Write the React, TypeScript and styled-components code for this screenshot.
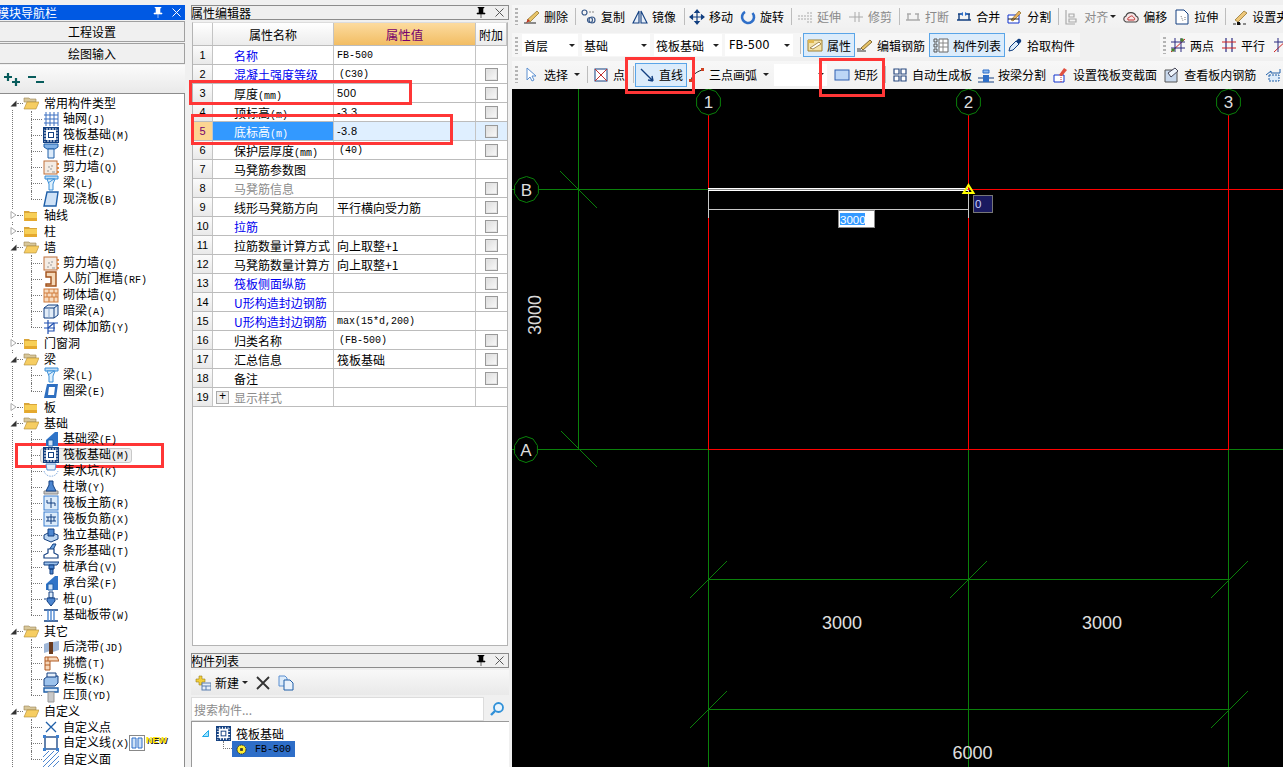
import React from "react";
import styled, { createGlobalStyle } from "styled-components";

const CJK = `"Noto Sans CJK SC", "Liberation Sans", sans-serif`;
const MONO = `"Liberation Mono", "Noto Sans CJK SC", monospace`;

const GlobalStyle = createGlobalStyle`
  html, body { margin: 0; padding: 0; background: #f0f0f0; }
  * { box-sizing: border-box; }
  body { font-family: ${CJK}; font-size: 12px; color: #000; }
`;

/* ---------- icons ---------- */
const B = "#1f5fa8";
const N = "#123f80";
const icons: Record<string, React.ReactNode> = {
  folder: (<><path d="M1 4h5l1 1h7v9H1z" fill="#d9a53a" /><path d="M1.5 6h12.5v8H1.5z" fill="#f7cf57" /><path d="M1.5 11h12.5v3H1.5z" fill="#e5a92e" /></>),
  folderOpen: (<><path d="M1 3h5l1 1h6v3H1z" fill="#d8c79a" stroke="#9a8450" strokeWidth=".6" /><path d="M1 14 4 7h12l-3 7z" fill="#f6cd62" stroke="#b08a35" strokeWidth=".6" /></>),
  grid: (<g stroke="#3a6fc0" strokeWidth="1" fill="none"><path d="M3 1v14M7 1v14M11 1v14M15 1v14M1 4h14M1 8h14M1 12h14" /></g>),
  raft: (<><rect x="0" y="0" width="16" height="16" fill="#fff" /><rect x="1.5" y="1.5" width="13" height="13" fill="none" stroke={N} strokeWidth="3" strokeDasharray="2 1" /><rect x="0.5" y="0.5" width="15" height="15" fill="none" stroke={N} /><rect x="5.5" y="5.5" width="5" height="5" fill="#fff" stroke={N} /></>),
  column: (<><path d="M1 1h14v3l-3 2H4L1 4z" fill="#7fb0e6" stroke={B} /><path d="M5 6h6v9H5z" fill="#dcebfa" stroke={B} /></>),
  shear: (<><rect x="1" y="2" width="13" height="13" fill="#f4ece4" stroke="#c0703a" /><path d="M4 12h2M7 10h2M5 8h2M9 13h3M8 7h2" stroke="#999" /><path d="M15 4v2M15 8v2M15 12v2" stroke="#d8701c" strokeWidth="1.5" /></>),
  beam: (<><path d="M2 1h13v3H2z" fill="#bcdcf6" stroke="#3b8fd8" /><path d="M4 4l8 0-2 5v6H6V9z" fill="#dff0fc" stroke="#3b8fd8" /><path d="M5 8l6-4" stroke="#3b8fd8" /></>),
  slab: (<path d="M4 1h11l-2 14H1z" fill="#cfe2f7" stroke={B} strokeWidth="1.4" />),
  frameWall: (<path d="M3 1h10v14H3v-2h5V6H3z" fill="#f5d8b8" stroke="#a0501a" strokeWidth="1.4" />),
  brick: (<><rect x="1" y="2" width="14" height="13" fill="#f8dcc0" stroke="#d07a3a" /><path d="M1 6h14M1 10h14M6 2v4M11 2v4M4 6v4M9 6v4M13 6v4M6 10v5M11 10v5" stroke="#d07a3a" /></>),
  hidden: (<><path d="M1 5l4-3h10v10l-4 3H1z" fill="#e2ecf7" stroke={N} /><path d="M1 5h10v10M11 5l4-3" fill="none" stroke={N} /><path d="M6 5v10" stroke="#8aa8cc" /></>),
  rebar: (<g fill="none" stroke="#1f4fb0" strokeWidth="1.2"><path d="M1 4h14M5 1v14M11 4v8H5M1 9h11" /><path d="M5 9l6-5" /></g>),
  ring: (<><path d="M4 1h11l-2 14H1z" fill="#2f6fc0" /><path d="M6 4h6l-1 8H5z" fill="#fff" /></>),
  fbeam: (<><path d="M3 15V9L12 1h3v14z" fill="#2f74c8" /><path d="M5 15V9h5v6z" fill="#cfe2f7" stroke={B} /></>),
  pit: (<><path d="M3 1h10l-1 6H4z" fill="#e4effb" stroke="#5b8fd0" /><path d="M1 8c2 7 12 7 14 0" fill="none" stroke="#8ab0e0" strokeDasharray="1.5 1" /></>),
  pier: (<><path d="M1 12h14v3H1z" fill="#c9c9c9" stroke="#888" /><path d="M6 2h4v4l3 6H3l3-6z" fill="#4c86d0" stroke={N} /></>),
  mainBar: (<><rect x="1" y="1" width="14" height="14" fill="#dcebfa" stroke="#3b7fd0" /><path d="M8 3v10M4 8h8M4 5v3M12 8v3" stroke={N} fill="none" /></>),
  negBar: (<><rect x="1" y="1" width="14" height="14" fill="#dcebfa" stroke="#3b7fd0" /><path d="M8 3v10M3 6h10M3 10h10M5 6v4M11 6v4" stroke={N} fill="none" /></>),
  isolated: (<><path d="M1 8l6-3 8 3v4l-7 3-7-3z" fill="#bcd6f2" stroke={N} /><path d="M5 2h6v7H5z" fill="#4c86d0" stroke={N} /></>),
  strip: (<><path d="M6 7 10 1h3L10 7z" fill="#6fa5e0" stroke={N} /><path d="M1 15v-3l4-2V6h6v4l4 2v3z" fill="#fff" stroke={N} strokeWidth="1.2" /></>),
  cap: (<><path d="M1 3h15l-2 3H1z" fill="#9cc2ec" stroke={N} /><path d="M6 6h5v4H6zM7 10h3v5H7z" fill="#4c86d0" stroke={N} /></>),
  pile: (<><path d="M6 1h4v6H6z" fill="#dcebfa" stroke={N} /><path d="M4 7h8v3l-4 5-4-5z" fill="#4c86d0" stroke={N} /><path d="M1 8h2M13 8h2" stroke={N} /></>),
  band: (<><path d="M1 3h14M1 14h14" stroke={N} strokeWidth="1.4" /><path d="M5 3v11M11 3v11M8 3v11" stroke="#4c86d0" strokeWidth="1.4" /></>),
  pour: (<><path d="M1 5l6-2v9l-6 2z" fill="#9fb6d6" /><path d="M10 3l6-1v9l-6 2z" fill="#9fb6d6" /><path d="M6 3h4v12H6z" fill="#6a3a1c" /></>),
  eave: (<><path d="M2 2h12l2 4H7v9H2z" fill="#f6d6b8" stroke="#b05a22" /><path d="M2 6h5M2 10h5M5 2v4" stroke="#b05a22" /></>),
  rail: (<><path d="M1 8l4-3h10v7l-3 3H1z" fill="#9cc2ec" stroke={N} /><path d="M4 2h9v4H4z" fill="#e6f0fb" stroke={N} /></>),
  coping: (<><path d="M1 1h14v4H1z" fill="#dcebfa" stroke={B} strokeWidth="1.4" /><path d="M5 5h6v10H5z" fill="#c9c9c9" stroke="#999" /></>),
  xPoint: (<path d="M3 3l10 10M13 3 3 13" stroke={B} strokeWidth="1.3" />),
  xLine: (<><rect x="2" y="2" width="12" height="12" fill="none" stroke={N} strokeWidth="1.3" /><path d="M0 0h3v3H0zM13 0h3v3h-3zM0 13h3v3H0zM13 13h3v3h-3z" fill="#3b7fd0" /></>),
  hatch: (<path d="M0 6 6 0M0 11 11 0M0 16 16 0M5 16 16 5M10 16l6-6" stroke="#4c86d0" />),
  brush: (<><path d="M0 14h12" stroke="#222" /><path d="M3 11 13 2l2 2-9 9z" fill="#e8c468" stroke="#8a6a20" strokeWidth=".7" /><path d="M2 14l2-4 2 2z" fill="#c03020" /></>),
  copy: (<g fill="none" stroke="#3a5a8a" strokeWidth="1.2"><circle cx="3.5" cy="3.5" r="2.5" /><circle cx="11" cy="11" r="3" /><circle cx="9" cy="11" r="2.5" /><path d="M8 3h6" strokeDasharray="2 1" stroke="#888" /></g>),
  mirror: (<g stroke={N} strokeWidth="1.1" fill="#e6eef8"><path d="M7 2v12H1z" /><path d="M9 2v12h6z" /></g>),
  move: (<path d="M8 1v14M1 8h14M8 1 6 3.5h4zM8 15l-2-2.5h4zM1 8l2.5-2v4zM15 8l-2.5-2v4z" stroke={N} fill={N} strokeWidth="1.2" />),
  rotate: (<path d="M12.5 4A6 6 0 1 1 5 2.8" fill="none" stroke="#2f6fc8" strokeWidth="2.6" />),
  extend: (<path d="M1 7h8M1 10h8M11 3v11M14 3v11" stroke="#aaa" strokeDasharray="2 1" />),
  trim: (<path d="M1 8h14M7 3v10M11 3v10" stroke="#aaa" />),
  breakL: (<path d="M1 11h14M2 5h4M10 5h4M3 5v6M13 5v6" stroke="#aaa" strokeWidth="1.4" fill="none" />),
  merge: (<><path d="M1 11h14M2 5h4M10 5h4M3 5v6M13 5v6" stroke={N} strokeWidth="1.4" fill="none" /><path d="M7 3 4 5l3 2zM9 3l3 2-3 2z" fill="#2f6fc8" /></>),
  split: (<><path d="M1 6h11v8H1z" fill="#fff" stroke="#1133cc" /><path d="M4 11 12 2l2 2-8 8z" fill="#e8b060" stroke="#8a6a20" strokeWidth=".7" /><path d="M1 10h11" stroke="#222" /></>),
  align: (<path d="M2 1v14h9M5 5h5v3H5zM5 10h7v3H5z" fill="none" stroke="#aaa" strokeWidth="1.2" />),
  offset: (<><path d="M3 13c-3-1-3-5 0-6 1-4 8-5 10 0 3 1 3 5 0 6z" fill="#f7e6e6" stroke="#444" strokeWidth="1.1" /><path d="M5 11c-1-2 1-3 2-3 1-2 3-1 4 1 1 0 1 2 0 2z" fill="none" stroke="#c03030" /></>),
  stretch: (<><path d="M2 1h8l4 4v10H2z" fill="#fff" stroke={N} /><path d="M7 7l2 5M11 8v4" stroke="#777" strokeDasharray="1 1" /></>),
  setting: (<><path d="M1 15h3M6 15h3M11 15h3" stroke="#222" /><path d="M3 11 12 2l3 2-9 9z" fill="#eec77a" stroke="#8a6a20" strokeWidth=".7" /><rect x="5" y="13" width="3" height="3" fill="#111" /></>),
  prop: (<><path d="M1 3h14v11H1z" fill="#f4e2a8" stroke="#a08030" /><path d="M3 11 12 5l2 2-8 5z" fill="#fff" stroke="#806020" strokeWidth=".7" /><path d="M1 3h6v3H1z" fill="#e0b850" /></>),
  pencil: (<><path d="M0 12h4M0 14h9" stroke="#333" /><path d="M4 11 13 3l2 2-9 8z" fill="#e8c468" stroke="#6a5018" strokeWidth=".8" /></>),
  list: (<><path d="M1 2h3v3H1zM1 7h3v3H1zM1 12h3v3H1z" fill="none" stroke="#555" /><path d="M6 2h9v13H6z" fill="#fff" stroke="#666" /><path d="M6 6h9M6 10h9M10 2v13" stroke="#888" /></>),
  dropper: (<><path d="M2 14l1-4 6-6 3 3-6 6z" fill="#dcebfa" stroke={N} /><path d="M9 4l2-2c2-1 4 1 3 3l-2 2z" fill="#123f80" /></>),
  twoPts: (<><path d="M1 15 15 2" stroke="#d02020" /><path d="M5 1v14M11 1v14" stroke="#2a2a80" /><path d="M1 5h14M1 11h14" stroke="#2a2a80" /><circle cx="12" cy="3" r="1.8" fill="#4a8030" /><circle cx="3" cy="13" r="1.8" fill="#4a8030" /></>),
  parallel: (<><path d="M5 1v14M11 1v14" stroke="#2a2a80" strokeWidth="1.2" /><path d="M1 5h14M1 11h14" stroke="#d02020" strokeWidth="1.2" /></>),
  cut: (<><path d="M1 15 15 2" stroke="#d02020" /><path d="M5 1v14M1 5h14" stroke="#2a2a80" /></>),
  arrowSel: (<path d="M3 1v12l3-3 2 4 2-1-2-4h4z" fill="#fff" stroke="#5b8fd0" />),
  pointBox: (<><rect x="2" y="2" width="12" height="12" fill="#fff" stroke={N} /><path d="M2 2l12 12M14 2 2 14" stroke="#c03030" /></>),
  lineTool: (<path d="M2 2 14 14M14 14l-5-1M14 14l-1-5" stroke={N} strokeWidth="1.4" fill="none" />),
  arc: (<><path d="M2 14C3 8 7 5 13 3" fill="none" stroke="#222" /><rect x="0" y="12" width="3" height="3" fill="#d04020" /><rect x="12" y="1" width="3" height="3" fill="#d04020" /></>),
  rect: (<rect x="1" y="3" width="14" height="10" fill="#bcd6f6" stroke="#2f5fb0" />),
  auto: (<path d="M2 2h5v5H2zM9 2h5v5H9zM2 9h5v5H2zM9 9h5v5H9z" fill="#fff" stroke="#2a4a80" strokeWidth="1.2" />),
  byBeam: (<><path d="M0 11h16M0 15h16" stroke="#123f80" /><path d="M5 8h6v7H5z" fill="#2f6fc8" /><path d="M5 3h6v3H5z" fill="#8ab8f0" stroke="#2f6fc8" /></>),
  section: (<><path d="M1 8h10v7H1z" fill="#fff" stroke="#1133cc" /><path d="M6 8l5-7 3 2-5 6z" fill="#e05040" /><path d="M8 8v7" stroke="#d03030" strokeDasharray="1 1" /></>),
  inspect: (<><path d="M1 3h12v12H1z" fill="#c8d8ec" stroke="#555" /><path d="M4 6l7-5 3 3-7 6z" fill="#eef4fb" stroke="#445" /></>),
  last: (<><path d="M1 8 6 4v2h9V2" fill="none" stroke="#1f5fa8" /><path d="M4 8h10v6H4z" fill="#dcebfa" stroke="#1f5fa8" strokeDasharray="2 1" /></>),
  newPlus: (<><path d="M1 4h3V1h3v3h3v3H7v3H4V7H1z" fill="#f2cf3a" stroke="#9a8020" strokeWidth=".6" /><rect x="7" y="8" width="9" height="7" fill="#e6eef8" stroke="#5b7fb0" /><path d="M7 11h9M11 11v4" stroke="#5b7fb0" /></>),
  docs: (<><path d="M1 1h6l2 2v8H1z" fill="#dcebfa" stroke="#5b8fd0" /><path d="M6 5h6l3 3v7H6z" fill="#eaf2fb" stroke="#1f5fa8" /></>),
  search: (<><circle cx="9.5" cy="6.5" r="4.5" fill="#e8f4fd" stroke="#2f90d8" strokeWidth="1.8" /><path d="M6 10l-4 4" stroke="#2f90d8" strokeWidth="2.4" /></>),
  sun: (<><circle cx="8" cy="8" r="6.5" fill="#ffee33" stroke="#222" strokeWidth="1.4" strokeDasharray="2 1" /><rect x="6" y="6" width="4" height="4" fill="#333" /></>),
  doubleBar: (<><rect x="0.5" y="0.5" width="15" height="15" fill="#fff" stroke="#888" /><path d="M3 3h4v10H3zM9 3h4v10H9z" fill="#cfe2f7" stroke="#2f6fc8" /></>),
};

const IconSvg = styled.svg<{ $size?: number }>`
  width: ${(p) => p.$size ?? 16}px;
  height: ${(p) => p.$size ?? 16}px;
  flex: none;
  display: block;
`;

const Icon = ({ name, size }: { name: string; size?: number }) => (
  <IconSvg viewBox="0 0 16 16" $size={size}>
    {icons[name]}
  </IconSvg>
);

/* ---------- page ---------- */
const Page = styled.div`
  position: relative;
  width: 1283px;
  height: 767px;
  overflow: hidden;
  display: flex;
  background: #f0f0f0;
`;

const RedMark = styled.div<{ $x: number; $y: number; $w: number; $h: number }>`
  position: absolute;
  left: ${(p) => p.$x}px;
  top: ${(p) => p.$y}px;
  width: ${(p) => p.$w}px;
  height: ${(p) => p.$h}px;
  border: 3px solid #ff3636;
  pointer-events: none;
`;

/* ---------- panels ---------- */
const NavPanel = styled.aside`
  width: 185px;
  height: 767px;
  padding-top: 5px;
  display: flex;
  flex-direction: column;
  flex: none;
`;

const MiddlePanel = styled.section`
  width: 318px;
  height: 767px;
  margin-left: 6px;
  padding-top: 5px;
  display: flex;
  flex-direction: column;
  flex: none;
`;

const TitleBar = styled.div<{ $active?: boolean }>`
  height: 15px;
  flex: none;
  display: flex;
  align-items: center;
  line-height: 15px;
  overflow: hidden;
  background: ${(p) => (p.$active ? "#0059e3" : "#efefef")};
  color: ${(p) => (p.$active ? "#fff" : "#000")};
  border: ${(p) => (p.$active ? "none" : "1px solid #8c8c8c")};
  padding-right: 4px;
`;

const TitleText = styled.span<{ $active?: boolean }>`
  flex: 1;
  white-space: nowrap;
  margin-left: ${(p) => (p.$active ? -3 : -1)}px;
`;

const PinGlyph = styled.svg`
  width: 10px;
  height: 11px;
  margin-right: 9px;
  flex: none;
`;

const CloseGlyph = styled.svg`
  width: 9px;
  height: 9px;
  flex: none;
`;

const TitleControls = ({ color }: { color: string }) => (
  <>
    <PinGlyph viewBox="0 0 10 11">
      <path d="M2 0h6v1H7v5h2v1H1V6h2V1H2zM5 7v4" fill={color} stroke={color} strokeWidth=".6" />
    </PinGlyph>
    <CloseGlyph viewBox="0 0 9 9">
      <path d="M0.5 0.5l8 8M8.5 0.5l-8 8" stroke={color === "#fff" ? "#fff" : "#555"} />
    </CloseGlyph>
  </>
);

const NavButton = styled.div`
  height: 21px;
  margin-top: 1px;
  flex: none;
  display: flex;
  align-items: center;
  justify-content: center;
  background: #f0f0f0;
  border: 1px solid #a0a0a0;
  border-left: none;
  &:first-of-type { margin-top: 2px; }
`;

const ExpandBar = styled.div`
  height: 28px;
  flex: none;
  display: flex;
  align-items: center;
  padding-left: 3px;
  gap: 6px;
  margin-top: 1px;
  background: linear-gradient(#fbfbfb, #e9e9e9);
`;

const Tree = styled.div`
  flex: 1;
  min-height: 0;
  overflow: hidden;
  padding-top: 1px;
  border-top: 1px solid #8c8c8c;
  border-right: 1px solid #8c8c8c;
  background-color: #fff;
  background-image: repeating-linear-gradient(to bottom, #777 0 1px, transparent 1px 2px);
  background-repeat: no-repeat;
  background-position: 12px 8px;
  background-size: 1px 100%;
`;

const FolderRow = styled.div`
  position: relative;
  height: 16px;
  display: flex;
  align-items: center;
  padding-left: 10px;
  gap: 5px;
  white-space: nowrap;
  &::after {
    content: "";
    position: absolute;
    left: 17px;
    width: 6px;
    top: 8px;
    border-top: 1px dotted #777;
  }
`;

const Expander = styled.span`
  width: 7px;
  height: 12px;
  flex: none;
  margin-right: 1px;
  display: flex;
  align-items: center;
  justify-content: center;
  background: #fff;
  svg { width: 7px; height: 8px; display: block; }
`;

const ChildRow = styled.div<{ $last?: boolean }>`
  position: relative;
  height: 16px;
  display: flex;
  align-items: center;
  padding-left: 40px;
  white-space: nowrap;
  &::before {
    content: "";
    position: absolute;
    left: 31px;
    top: 0;
    height: ${(p) => (p.$last ? 8 : 16)}px;
    border-left: 1px dotted #777;
  }
  &::after {
    content: "";
    position: absolute;
    left: 31px;
    top: 8px;
    width: 11px;
    border-top: 1px dotted #777;
  }
`;

const RowBody = styled.div<{ $selected?: boolean }>`
  position: relative;
  z-index: 1;
  height: 15px;
  display: flex;
  align-items: center;
  gap: 4px;
  padding: 0 3px 0 2px;
  border-radius: 3px;
  border: 1px solid ${(p) => (p.$selected ? "#c8c8c8" : "transparent")};
  background: ${(p) => (p.$selected ? "#eeeeee" : "transparent")};
  ${(p) => (p.$selected ? "width: 92px;" : "")}
`;

const Label = styled.span`
  line-height: 16px;
`;

const Code = styled.span`
  font-family: ${MONO};
  font-size: 10px;
`;

const TagIcon = styled.span`
  margin-left: -4px;
`;

const NewTag = styled.span`
  margin-left: -3px;
  margin-top: -7px;
  font: bold 9px "Liberation Sans", sans-serif;
  color: #ffe600;
  text-shadow: 1px 1px 0 #222;
`;

type Leaf = { icon: string; name: string; code?: string; selected?: boolean; tag?: boolean };
type Branch = { name: string; open: boolean; items?: Leaf[] };

const treeData: Branch[] = [
  {
    name: "常用构件类型",
    open: true,
    items: [
      { icon: "grid", name: "轴网", code: "(J)" },
      { icon: "raft", name: "筏板基础", code: "(M)" },
      { icon: "column", name: "框柱", code: "(Z)" },
      { icon: "shear", name: "剪力墙", code: "(Q)" },
      { icon: "beam", name: "梁", code: "(L)" },
      { icon: "slab", name: "现浇板", code: "(B)" },
    ],
  },
  { name: "轴线", open: false },
  { name: "柱", open: false },
  {
    name: "墙",
    open: true,
    items: [
      { icon: "shear", name: "剪力墙", code: "(Q)" },
      { icon: "frameWall", name: "人防门框墙", code: "(RF)" },
      { icon: "brick", name: "砌体墙", code: "(Q)" },
      { icon: "hidden", name: "暗梁", code: "(A)" },
      { icon: "rebar", name: "砌体加筋", code: "(Y)" },
    ],
  },
  { name: "门窗洞", open: false },
  {
    name: "梁",
    open: true,
    items: [
      { icon: "beam", name: "梁", code: "(L)" },
      { icon: "ring", name: "圈梁", code: "(E)" },
    ],
  },
  { name: "板", open: false },
  {
    name: "基础",
    open: true,
    items: [
      { icon: "fbeam", name: "基础梁", code: "(F)" },
      { icon: "raft", name: "筏板基础", code: "(M)", selected: true },
      { icon: "pit", name: "集水坑", code: "(K)" },
      { icon: "pier", name: "柱墩", code: "(Y)" },
      { icon: "mainBar", name: "筏板主筋", code: "(R)" },
      { icon: "negBar", name: "筏板负筋", code: "(X)" },
      { icon: "isolated", name: "独立基础", code: "(P)" },
      { icon: "strip", name: "条形基础", code: "(T)" },
      { icon: "cap", name: "桩承台", code: "(V)" },
      { icon: "fbeam", name: "承台梁", code: "(F)" },
      { icon: "pile", name: "桩", code: "(U)" },
      { icon: "band", name: "基础板带", code: "(W)" },
    ],
  },
  {
    name: "其它",
    open: true,
    items: [
      { icon: "pour", name: "后浇带", code: "(JD)" },
      { icon: "eave", name: "挑檐", code: "(T)" },
      { icon: "rail", name: "栏板", code: "(K)" },
      { icon: "coping", name: "压顶", code: "(YD)" },
    ],
  },
  {
    name: "自定义",
    open: true,
    items: [
      { icon: "xPoint", name: "自定义点" },
      { icon: "xLine", name: "自定义线", code: "(X)", tag: true },
      { icon: "hatch", name: "自定义面" },
    ],
  },
];

const NavTree = () => (
  <Tree>
    {treeData.map((branch) => (
      <React.Fragment key={branch.name}>
        <FolderRow>
          <Expander>
            <svg viewBox="0 0 7 8">
              {branch.open ? (
                <path d="M6.5 1.5v6h-6z" fill="#333" />
              ) : (
                <path d="M1 .5l5 3.5-5 3.5z" fill="#fff" stroke="#aaa" />
              )}
            </svg>
          </Expander>
          <Icon name={branch.open ? "folderOpen" : "folder"} />
          <Label>{branch.name}</Label>
        </FolderRow>
        {branch.items?.map((leaf, i) => (
          <ChildRow key={leaf.name + i} $last={i === branch.items!.length - 1}>
            <RowBody $selected={leaf.selected}>
              <Icon name={leaf.icon} />
              <Label>
                {leaf.name}
                {leaf.code && <Code>{leaf.code}</Code>}
              </Label>
              {leaf.tag && (
                <>
                  <TagIcon>
                    <Icon name="doubleBar" />
                  </TagIcon>
                  <NewTag>NEW</NewTag>
                </>
              )}
            </RowBody>
          </ChildRow>
        ))}
      </React.Fragment>
    ))}
  </Tree>
);

/* ---------- property grid ---------- */
const PropGrid = styled.div`
  height: 624px;
  margin-top: 2px;
  margin-left: 1px;
  margin-right: 1px;
  flex: none;
  background: #fff;
  border: 1px solid #b4b4b4;
  border-top-color: #dcdcdc;
`;

const PropRow = styled.div<{ $head?: boolean }>`
  display: grid;
  grid-template-columns: 20px 121px 142px 31px;
  height: ${(p) => (p.$head ? 23 : 19)}px;
  border-bottom: 1px solid #bcbcbc;
`;

const HeadCell = styled.div<{ $value?: boolean }>`
  display: flex;
  align-items: center;
  justify-content: center;
  border-right: 1px solid #c4c4c4;
  background: ${(p) =>
    p.$value ? "linear-gradient(#fcdb9f, #f2bd63)" : "linear-gradient(#ffffff, #ececec)"};
  color: ${(p) => (p.$value ? "#76006e" : "#000")};
  font-size: ${(p) => (p.$value ? 12.5 : 12)}px;
`;

const NumCell = styled.div<{ $current?: boolean }>`
  display: flex;
  align-items: center;
  justify-content: center;
  border-right: 1px solid #c4c4c4;
  font: 11px "Liberation Sans", sans-serif;
  color: ${(p) => (p.$current ? "#76006e" : "#000")};
  background: ${(p) => (p.$current ? "#fcd592" : "linear-gradient(#fbfbfb, #e9e9e9)")};
`;

const NameCell = styled.div<{ $tone?: string; $current?: boolean; $indent?: number }>`
  display: flex;
  align-items: center;
  overflow: hidden;
  white-space: nowrap;
  padding-left: ${(p) => p.$indent ?? 21}px;
  border-right: 1px solid #c4c4c4;
  color: ${(p) => (p.$current ? "#fff" : p.$tone === "link" ? "#0000f0" : p.$tone === "off" ? "#8c8c8c" : "#000")};
  background: ${(p) => (p.$current ? "#3399ff" : "transparent")};
`;

const ValueCell = styled.div<{ $current?: boolean; $kind?: string; $inset?: number }>`
  display: flex;
  align-items: center;
  padding-left: ${(p) => p.$inset ?? 3}px;
  overflow: hidden;
  white-space: nowrap;
  border-right: 1px solid #c4c4c4;
  background: ${(p) => (p.$current ? "#dfefff" : "transparent")};
  ${(p) => (p.$kind === "mono" ? `font-family: ${MONO}; font-size: 10px;` : "")}
  ${(p) => (p.$kind === "num" ? `font-family: "Liberation Sans", sans-serif; font-size: 11px; letter-spacing: 0.4px;` : "")}
`;

const AddCell = styled.div<{ $current?: boolean }>`
  display: flex;
  align-items: center;
  justify-content: center;
  background: ${(p) => (p.$current ? "#dfefff" : "transparent")};
`;

const CheckBox = styled.span`
  width: 13px;
  height: 13px;
  border: 1px solid #999;
  outline: 1px solid #e4e4e4;
  outline-offset: -2px;
  background: linear-gradient(135deg, #dcdcdc, #fafafa);
`;

const PlusBox = styled.span`
  width: 13px;
  height: 13px;
  margin-right: 5px;
  flex: none;
  display: flex;
  align-items: center;
  justify-content: center;
  border: 1px solid #aaa;
  background: #eee;
  color: #000;
  font: 12px/11px "Liberation Mono", monospace;
`;

type Prop = { n: number; name: string; unit?: string; tone?: string; value?: string; kind?: string; check?: boolean };

const props: Prop[] = [
  { n: 1, name: "名称", tone: "link", value: "FB-500", kind: "mono" },
  { n: 2, name: "混凝土强度等级", tone: "link", value: "(C30)", kind: "mono", check: true },
  { n: 3, name: "厚度", unit: "(mm)", value: "500", kind: "num", check: true },
  { n: 4, name: "顶标高", unit: "(m)", value: "-3.3", kind: "num", check: true },
  { n: 5, name: "底标高", unit: "(m)", value: "-3.8", kind: "num", check: true },
  { n: 6, name: "保护层厚度", unit: "(mm)", value: "(40)", kind: "mono", check: true },
  { n: 7, name: "马凳筋参数图" },
  { n: 8, name: "马凳筋信息", tone: "off", check: true },
  { n: 9, name: "线形马凳筋方向", value: "平行横向受力筋", check: true },
  { n: 10, name: "拉筋", tone: "link", check: true },
  { n: 11, name: "拉筋数量计算方式", value: "向上取整+1", check: true },
  { n: 12, name: "马凳筋数量计算方", value: "向上取整+1", check: true },
  { n: 13, name: "筏板侧面纵筋", tone: "link", check: true },
  { n: 14, name: "U形构造封边钢筋", tone: "link", check: true },
  { n: 15, name: "U形构造封边钢筋", tone: "link", value: "max(15*d,200)", kind: "mono" },
  { n: 16, name: "归类名称", value: "(FB-500)", kind: "mono", check: true },
  { n: 17, name: "汇总信息", value: "筏板基础", check: true },
  { n: 18, name: "备注", check: true },
];

const PropertyGrid = () => (
  <PropGrid>
    <PropRow $head>
      <HeadCell />
      <HeadCell>属性名称</HeadCell>
      <HeadCell $value>属性值</HeadCell>
      <HeadCell>附加</HeadCell>
    </PropRow>
    {props.map((p) => {
      const current = p.n === 5;
      return (
        <PropRow key={p.n}>
          <NumCell $current={current}>{p.n}</NumCell>
          <NameCell $tone={p.tone} $current={current}>
            <span>
              {p.name}
              {p.unit && <Code>{p.unit}</Code>}
            </span>
          </NameCell>
          <ValueCell $current={current} $kind={p.kind} $inset={p.value?.startsWith("(") ? 5 : 3}>
            {p.value}
          </ValueCell>
          <AddCell $current={current}>{p.check && <CheckBox />}</AddCell>
        </PropRow>
      );
    })}
    <PropRow>
      <NumCell>19</NumCell>
      <NameCell $tone="off" $indent={3}>
        <PlusBox>+</PlusBox>显示样式
      </NameCell>
      <ValueCell />
      <AddCell />
    </PropRow>
  </PropGrid>
);

/* ---------- component list ---------- */
const ListTitle = styled(TitleBar)`
  margin-top: 7px;
`;

const ListToolbar = styled.div`
  height: 25px;
  margin-top: 2px;
  flex: none;
  display: flex;
  align-items: center;
  padding-left: 4px;
  background: linear-gradient(#f8f8f8, #e9e9e9);
`;

const NewLabel = styled.span`
  margin-left: 4px;
`;

const SmallCaret = styled.span<{ $ml?: number }>`
  width: 0;
  height: 0;
  flex: none;
  margin-left: ${(p) => p.$ml ?? 3}px;
  border-left: 3px solid transparent;
  border-right: 3px solid transparent;
  border-top: 3px solid #222;
`;

const ListButton = styled.span<{ $ml: number }>`
  display: flex;
  margin-left: ${(p) => p.$ml}px;
`;

const SearchRow = styled.div`
  height: 24px;
  margin-top: 2px;
  flex: none;
  display: flex;
  align-items: center;
`;

const SearchInput = styled.div`
  width: 293px;
  height: 24px;
  display: flex;
  align-items: center;
  padding-left: 2px;
  color: #8c8c8c;
  background: #fff;
  border: 1px solid #dcdcdc;
`;

const SearchButton = styled.span`
  margin-left: 5px;
`;

const ListTree = styled.div`
  flex: 1;
  min-height: 0;
  background: #fff;
  border-left: 1px solid #999;
  border-top: 1px solid #999;
  padding-top: 3px;
`;

const ListRoot = styled.div`
  height: 16px;
  display: flex;
  align-items: center;
  padding-left: 10px;
`;

const CyanArrow = styled.svg`
  width: 7px;
  height: 7px;
  margin-right: 7px;
`;

const RootName = styled.span`
  margin-left: 5px;
`;

const ListLeaf = styled.div`
  position: relative;
  width: 63px;
  height: 16px;
  margin-left: 40px;
  display: flex;
  align-items: center;
  padding-left: 4px;
  background: #2e6ec8;
  font-family: ${MONO};
  font-size: 10px;
  &::before {
    content: "";
    position: absolute;
    left: -9px;
    top: 0;
    bottom: 8px;
    width: 8px;
    border-left: 1px dotted #777;
    border-bottom: 1px dotted #777;
  }
`;

const LeafName = styled.span`
  margin-left: 8px;
`;

const ComponentList = () => (
  <>
    <ListTitle>
      <TitleText>构件列表</TitleText>
      <TitleControls color="#000" />
    </ListTitle>
    <ListToolbar>
      <Icon name="newPlus" />
      <NewLabel>新建</NewLabel>
      <SmallCaret />
      <ListButton $ml={8}>
        <svg width="14" height="14" viewBox="0 0 14 14">
          <path d="M1 1l12 12M13 1 1 13" stroke="#333" strokeWidth="1.8" />
        </svg>
      </ListButton>
      <ListButton $ml={8}>
        <Icon name="docs" />
      </ListButton>
    </ListToolbar>
    <SearchRow>
      <SearchInput>搜索构件...</SearchInput>
      <SearchButton>
        <Icon name="search" />
      </SearchButton>
    </SearchRow>
    <ListTree>
      <ListRoot>
        <CyanArrow viewBox="0 0 7 7">
          <path d="M6.5 .5v6h-6z" fill="#9fe4ff" stroke="#20a8e8" />
        </CyanArrow>
        <Icon name="raft" size={15} />
        <RootName>筏板基础</RootName>
      </ListRoot>
      <ListLeaf>
        <Icon name="sun" size={11} />
        <LeafName>FB-500</LeafName>
      </ListLeaf>
    </ListTree>
  </>
);

/* ---------- toolbars ---------- */
const RightColumn = styled.main`
  width: 771px;
  height: 767px;
  margin-left: 3px;
  padding-top: 5px;
  display: flex;
  flex-direction: column;
  flex: none;
`;

const Bar = styled.div<{ $h: number; $mt?: number }>`
  height: ${(p) => p.$h}px;
  margin-top: ${(p) => p.$mt ?? 0}px;
  flex: none;
  display: flex;
  align-items: center;
  overflow: hidden;
  padding-left: 3px;
  background: linear-gradient(#f7f7f7, #f1f1f1);
`;

const SplitBar = styled(Bar)`
  padding-left: 0;
  justify-content: space-between;
  background: none;
`;

const Group = styled.div<{ $w: number }>`
  width: ${(p) => p.$w}px;
  height: 100%;
  flex: none;
  display: flex;
  align-items: center;
  overflow: hidden;
  padding-left: 3px;
  background: #f6f6f6;
`;

const Grip = styled.span`
  width: 3px;
  height: 17px;
  flex: none;
  background: repeating-linear-gradient(to bottom, #b4b4b4 0 2px, transparent 2px 4px);
`;

const Sep = styled.span<{ $ml: number }>`
  width: 1px;
  height: 17px;
  flex: none;
  margin-left: ${(p) => p.$ml}px;
  background: #bdbdbd;
`;

const ToolItem = styled.div<{ $ml: number; $off?: boolean }>`
  display: flex;
  align-items: center;
  flex: none;
  gap: 4px;
  margin-left: ${(p) => p.$ml}px;
  white-space: nowrap;
  color: ${(p) => (p.$off ? "#8a8a8a" : "#000")};
`;

const ToggleItem = styled(ToolItem)`
  height: 24px;
  padding: 0 3px;
  border: 1px solid #5aa5e8;
  background: #dcecfb;
`;

const Combo = styled.div<{ $ml: number; $w: number }>`
  width: ${(p) => p.$w}px;
  height: 22px;
  flex: none;
  display: flex;
  align-items: center;
  justify-content: space-between;
  margin-left: ${(p) => p.$ml}px;
  padding: 0 2px 0 2px;
  background: #fff;
`;

const ComboCaret = styled.span`
  width: 0;
  height: 0;
  margin-right: 1px;
  border-left: 3px solid transparent;
  border-right: 3px solid transparent;
  border-top: 3px solid #222;
`;

const ComboLatin = styled.span`
  margin-left: 2px;
  font: 11.5px "DejaVu Sans", sans-serif;
`;

type T = { icon?: string; label?: string; ml: number; off?: boolean; sep?: boolean; caret?: boolean; on?: boolean };

const renderTools = (list: T[]) =>
  list.map((t, i) => {
    if (t.sep) return <Sep key={i} $ml={t.ml} />;
    if (t.caret) return <SmallCaret key={i} $ml={t.ml} />;
    const Item = t.on ? ToggleItem : ToolItem;
    return (
      <Item key={i} $ml={t.ml} $off={t.off}>
        {t.icon && <Icon name={t.icon} />}
        {t.label && <span>{t.label}</span>}
      </Item>
    );
  });

const editTools: T[] = [
  { icon: "brush", label: "删除", ml: 6 },
  { sep: true, ml: 7 },
  { icon: "copy", label: "复制", ml: 5 },
  { icon: "mirror", label: "镜像", ml: 7 },
  { sep: true, ml: 8 },
  { icon: "move", label: "移动", ml: 4 },
  { icon: "rotate", label: "旋转", ml: 7 },
  { sep: true, ml: 7 },
  { icon: "extend", label: "延伸", ml: 5, off: true },
  { icon: "trim", label: "修剪", ml: 7, off: true },
  { sep: true, ml: 7 },
  { icon: "breakL", label: "打断", ml: 5, off: true },
  { icon: "merge", label: "合并", ml: 7 },
  { icon: "split", label: "分割", ml: 7 },
  { sep: true, ml: 7 },
  { icon: "align", label: "对齐", ml: 5, off: true },
  { caret: true, ml: 2 },
  { icon: "offset", label: "偏移", ml: 7 },
  { icon: "stretch", label: "拉伸", ml: 7 },
  { sep: true, ml: 7 },
  { icon: "setting", label: "设置夹", ml: 6 },
];

const viewTools: T[] = [
  { sep: true, ml: 7 },
  { icon: "prop", label: "属性", ml: 2, on: true },
  { icon: "pencil", label: "编辑钢筋", ml: 2 },
  { icon: "list", label: "构件列表", ml: 4, on: true },
  { icon: "dropper", label: "拾取构件", ml: 2 },
];

const axisTools: T[] = [
  { icon: "twoPts", label: "两点", ml: 4 },
  { icon: "parallel", label: "平行", ml: 7 },
  { icon: "cut", ml: 8 },
];

const drawToolsA: T[] = [
  { icon: "arrowSel", label: "选择", ml: 6 },
  { caret: true, ml: 6 },
  { sep: true, ml: 7 },
  { icon: "pointBox", label: "点", ml: 5 },
  { sep: true, ml: 8 },
  { icon: "lineTool", label: "直线", ml: 1, on: true },
  { icon: "arc", label: "三点画弧", ml: 2 },
  { caret: true, ml: 6 },
];

const drawToolsB: T[] = [
  { icon: "rect", label: "矩形", ml: 7 },
  { sep: true, ml: 7 },
  { icon: "auto", label: "自动生成板", ml: 6 },
  { icon: "byBeam", label: "按梁分割", ml: 6 },
  { icon: "section", label: "设置筏板变截面", ml: 7 },
  { icon: "inspect", label: "查看板内钢筋", ml: 7 },
  { icon: "last", ml: 9 },
];

/* ---------- canvas ---------- */
const Canvas = styled.div`
  flex: 1;
  min-height: 0;
  margin-top: 1px;
  background: #000;
  overflow: hidden;
`;

const Drawing = styled.svg`
  display: block;
  width: 771px;
  height: 678px;
`;

const GREEN = "#0a800a";
const RED = "#ff0000";

const Bubble = ({ x, y, t, rx = 12.5 }: { x: number; y: number; t: string; rx?: number }) => {
  const pts = Array.from({ length: 10 }, (_, i) => {
    const a = (Math.PI * 2 * i) / 10 + Math.PI / 10;
    return `${x + rx * Math.cos(a)},${y + 13 * Math.sin(a)}`;
  }).join(" ");
  return (
    <>
      <polygon points={pts} fill="#000" stroke={GREEN} />
      <text x={x} y={y + 6} fill="#ddd" fontSize="17" fontFamily="Liberation Sans" textAnchor="middle">
        {t}
      </text>
    </>
  );
};

const Tick = ({ x, y }: { x: number; y: number }) => (
  <line x1={x - 18} y1={y + 19} x2={x + 19} y2={y - 18} stroke={GREEN} />
);

const DimText = ({ x, y, t }: { x: number; y: number; t: string }) => (
  <text x={x} y={y} fill="#e0e0e0" fontSize="18" fontFamily="Liberation Sans" textAnchor="middle">
    {t}
  </text>
);

const CadView = () => (
  <Drawing viewBox="512 89 771 678">
    <g shapeRendering="crispEdges">
      <line x1="578.5" y1="89" x2="578.5" y2="449" stroke={GREEN} />
      <line x1="512" y1="189.5" x2="708" y2="189.5" stroke={GREEN} />
      <line x1="968" y1="189.5" x2="1283" y2="189.5" stroke={RED} />
      <line x1="512" y1="449.5" x2="708" y2="449.5" stroke={GREEN} />
      <line x1="1228" y1="449.5" x2="1283" y2="449.5" stroke={GREEN} />
      {[708.5, 968.5, 1228.5].map((x) => (
        <React.Fragment key={x}>
          <line x1={x} y1="89" x2={x} y2="449" stroke={RED} />
          <line x1={x} y1="450" x2={x} y2="767" stroke={GREEN} />
        </React.Fragment>
      ))}
      <line x1="708" y1="449.5" x2="1229" y2="449.5" stroke={RED} />
      <line x1="708" y1="579.5" x2="1229" y2="579.5" stroke={GREEN} />
      <line x1="708" y1="709.5" x2="1229" y2="709.5" stroke={GREEN} />
      <line x1="708.5" y1="190" x2="708.5" y2="218" stroke="#c8c8c8" />
      <line x1="968.5" y1="190" x2="968.5" y2="218" stroke="#c8c8c8" />
      <line x1="708" y1="209.5" x2="968" y2="209.5" stroke="#c8c8c8" />
      <rect x="708" y="188" width="260" height="3" fill="#fff" />
      <line x1="708" y1="189.5" x2="968" y2="189.5" stroke="#8a8a8a" />
    </g>
    <line x1="560" y1="171" x2="597" y2="208" stroke={GREEN} />
    <line x1="561" y1="431" x2="597" y2="467" stroke={GREEN} />
    <Tick x={708} y={579} />
    <Tick x={968} y={579} />
    <Tick x={1229} y={579} />
    <Tick x={708} y={709} />
    <Tick x={1229} y={709} />
    <Bubble x={708.5} y={102} t="1" />
    <Bubble x={968.5} y={102} t="2" />
    <Bubble x={1228.5} y={102} t="3" />
    <Bubble x={526.5} y={189.5} t="B" />
    <Bubble x={526} y={449.5} t="A" rx={12} />
    <path d="M968.5 185 973.5 193H963.5Z" fill="none" stroke="#ffff00" strokeWidth="2" />
    <rect x="838.5" y="210.5" width="36" height="17" fill="#fff" stroke="#888" />
    <rect x="840" y="213" width="25" height="12" fill="#3399ff" />
    <text x="840" y="223.5" fill="#fff" fontSize="11.5" fontFamily="Liberation Sans">3000</text>
    <rect x="973.5" y="195.5" width="19" height="17" fill="#1a1a60" stroke="#777" />
    <text x="975" y="208" fill="#c8d0ff" fontSize="11.5" fontFamily="Liberation Sans">0</text>
    <DimText x={842} y={629} t="3000" />
    <DimText x={1102} y={629} t="3000" />
    <DimText x={972.5} y={759} t="6000" />
    <text
      transform="translate(541 335) rotate(-90)"
      fill="#d8d8d8"
      fontSize="19"
      fontFamily="Liberation Sans"
      textLength="40"
      lengthAdjust="spacingAndGlyphs"
    >
      3000
    </text>
  </Drawing>
);

const App = () => (
  <>
    <GlobalStyle />
    <Page>
      <NavPanel>
        <TitleBar $active>
          <TitleText $active>模块导航栏</TitleText>
          <TitleControls color="#fff" />
        </TitleBar>
        <NavButton>工程设置</NavButton>
        <NavButton>绘图输入</NavButton>
        <ExpandBar>
          <svg width="18" height="15" viewBox="0 0 18 15">
            <path d="M1 5h8M5 1v8M9 10h8M13 6v8" stroke="#085c5c" strokeWidth="2.2" />
          </svg>
          <svg width="18" height="15" viewBox="0 0 18 15">
            <path d="M1 5h8M9 10h8" stroke="#085c5c" strokeWidth="2.2" />
          </svg>
        </ExpandBar>
        <NavTree />
      </NavPanel>

      <MiddlePanel>
        <TitleBar>
          <TitleText>属性编辑器</TitleText>
          <TitleControls color="#000" />
        </TitleBar>
        <PropertyGrid />
        <ComponentList />
      </MiddlePanel>

      <RightColumn>
        <Bar $h={23}>
          <Grip />
          {renderTools(editTools)}
        </Bar>
        <SplitBar $h={24} $mt={5}>
          <Group $w={568}>
            <Grip />
            <Combo $ml={4} $w={56}>首层<ComboCaret /></Combo>
            <Combo $ml={4} $w={68}>基础<ComboCaret /></Combo>
            <Combo $ml={4} $w={68}>筏板基础<ComboCaret /></Combo>
            <Combo $ml={3} $w={68}><ComboLatin>FB-500</ComboLatin><ComboCaret /></Combo>
            {renderTools(viewTools)}
          </Group>
          <Group $w={123}>
            <Grip />
            {renderTools(axisTools)}
          </Group>
        </SplitBar>
        <Bar $h={27} $mt={4}>
          <Grip />
          {renderTools(drawToolsA)}
          <Combo $ml={5} $w={53}><span /><ComboCaret /></Combo>
          {renderTools(drawToolsB)}
        </Bar>
        <Canvas>
          <CadView />
        </Canvas>
      </RightColumn>

      <RedMark $x={15} $y={443} $w={149} $h={25} />
      <RedMark $x={189} $y={80} $w={223} $h={25} />
      <RedMark $x={191} $y={114} $w={262} $h={31} />
      <RedMark $x={625} $y={57} $w={70} $h={37} />
      <RedMark $x={819} $y={58} $w={66} $h={39} />
    </Page>
  </>
);

export default App;
